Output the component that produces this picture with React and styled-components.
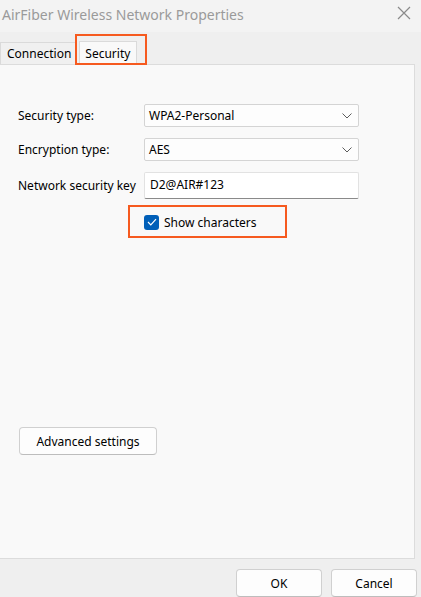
import React from "react";
import styled, { createGlobalStyle } from "styled-components";

const GlobalStyle = createGlobalStyle`
  html, body {
    margin: 0;
    padding: 0;
    background: #f0f0f0;
  }
  body {
    font-family: "Noto Sans", "Liberation Sans", sans-serif;
  }
`;

const Window = styled.div`
  width: 421px;
  height: 597px;
  display: flex;
  flex-direction: column;
  background: #efefef;
  overflow: hidden;
  font-size: 12px;
  color: #1a1a1a;
`;

const TitleBar = styled.div`
  height: 32px;
  flex: 0 0 32px;
  display: flex;
  align-items: center;
  justify-content: space-between;
  background: #f3f3f3;
  padding: 0 10px 0 2px;
`;

const Title = styled.div`
  font-size: 14px;
  color: #9a9a9a;
  margin-top: -4px;
`;

const CloseIcon = styled.svg`
  width: 14px;
  height: 14px;
  margin-top: -6px;
`;

const TabStrip = styled.div`
  position: relative;
  height: 32px;
  flex: 0 0 32px;
  display: flex;
  align-items: flex-end;
  gap: 3px;
`;

const Tab = styled.div`
  position: relative;
  height: ${(p) => (p.$active ? "24px" : "22px")};
  padding: ${(p) => (p.$active ? "0 6px 0 5px" : "0 4px 0 6px")};
  display: flex;
  align-items: center;
  box-sizing: border-box;
  background: ${(p) => (p.$active ? "#f9f9f9" : "#f0f0f0")};
  border: 1px solid #dadada;
  border-bottom: none;
  margin-bottom: ${(p) => (p.$active ? "-1px" : "0")};
  z-index: ${(p) => (p.$active ? 2 : 1)};
  font-size: 12px;
  color: #000;
`;

const Highlight = styled.div`
  position: absolute;
  border: 2px solid #f65a1f;
  pointer-events: none;
  z-index: 3;
  left: ${(p) => p.$left}px;
  top: ${(p) => p.$top}px;
  width: ${(p) => p.$width}px;
  height: ${(p) => p.$height}px;
  box-sizing: border-box;
`;

const Panel = styled.div`
  position: relative;
  height: 495px;
  flex: 0 0 495px;
  margin-right: 6px;
  margin-left: -1px;
  background: #f9f9f9;
  border: 1px solid #dcdcdc;
  box-sizing: border-box;
  display: flex;
  flex-direction: column;
  padding: 39px 0 0 18px;
`;

const Form = styled.div`
  display: grid;
  grid-template-columns: 126px 215px;
  row-gap: 11px;
  align-items: center;
`;

const Label = styled.div`
  font-size: 12px;
  color: #000;
  white-space: nowrap;
`;

const Select = styled.div`
  height: 23px;
  box-sizing: border-box;
  background: #fdfdfd;
  border: 1px solid #d4d4d4;
  border-radius: 2px;
  display: flex;
  align-items: center;
  justify-content: space-between;
  padding: 0 6px 0 4px;
  font-size: 12px;
  color: #000;
`;

const Input = styled.div`
  height: 27px;
  box-sizing: border-box;
  background: #ffffff;
  border: 1px solid #e2e2e2;
  border-bottom: 1px solid #8a8a8a;
  border-radius: 2px;
  display: flex;
  align-items: center;
  padding: 0 0 3px 5px;
  font-size: 12px;
  color: #000;
`;

const Chevron = styled.svg`
  width: 10px;
  height: 6px;
`;

const CheckRow = styled.div`
  position: relative;
  display: flex;
  align-items: center;
  gap: 5px;
  margin: 15px 0 0 126px;
  height: 16px;
`;

const CheckBox = styled.div`
  width: 15px;
  height: 15px;
  border-radius: 3px;
  background: #005fb8;
  display: flex;
  align-items: center;
  justify-content: center;
`;

const Spacer = styled.div`
  flex: 1;
`;

const Button = styled.div`
  width: ${(p) => p.$width}px;
  height: 28px;
  box-sizing: border-box;
  background: #fdfdfd;
  border: 1px solid #d0d0d0;
  border-bottom-color: #bdbdbd;
  border-radius: 4px;
  display: flex;
  align-items: center;
  justify-content: center;
  font-size: 12px;
  color: #000;
`;

const AdvancedWrap = styled.div`
  margin: 0 0 103px 1px;
`;

const Footer = styled.div`
  display: flex;
  justify-content: flex-end;
  gap: 9px;
  padding: 10px 4px 0 0;
`;

const rows = [
  { label: "Security type:", value: "WPA2-Personal", kind: "select" },
  { label: "Encryption type:", value: "AES", kind: "select" },
  { label: "Network security key", value: "D2@AIR#123", kind: "input" },
];

const ChevronDown = () => (
  <Chevron viewBox="0 0 10 6">
    <path d="M0.5 0.5 L5 5 L9.5 0.5" fill="none" stroke="#5c5c5c" strokeWidth="1" />
  </Chevron>
);

export default function App() {
  return (
    <>
      <GlobalStyle />
      <Window>
        <TitleBar>
          <Title>AirFiber Wireless Network Properties</Title>
          <CloseIcon viewBox="0 0 14 14">
            <path d="M1 1 L13 13 M13 1 L1 13" stroke="#8a8a8a" strokeWidth="1.2" />
          </CloseIcon>
        </TitleBar>
        <TabStrip>
          <Tab>Connection</Tab>
          <Tab $active>Security</Tab>
          <Highlight $left={75} $top={2} $width={72} $height={31} />
        </TabStrip>
        <Panel>
          <Form>
            {rows.map((r) => (
              <React.Fragment key={r.label}>
                <Label>{r.label}</Label>
                {r.kind === "select" ? (
                  <Select>
                    <span>{r.value}</span>
                    <ChevronDown />
                  </Select>
                ) : (
                  <Input>{r.value}</Input>
                )}
              </React.Fragment>
            ))}
          </Form>
          <CheckRow>
            <CheckBox>
              <svg width="10" height="8" viewBox="0 0 10 8">
                <path d="M1 4 L3.8 6.8 L9 1.2" fill="none" stroke="#fff" strokeWidth="1.2" />
              </svg>
            </CheckBox>
            <Label>Show characters</Label>
            <Highlight $left={-16} $top={-9} $width={159} $height={33} />
          </CheckRow>
          <Spacer />
          <AdvancedWrap>
            <Button $width={138}>Advanced settings</Button>
          </AdvancedWrap>
        </Panel>
        <Footer>
          <Button $width={86}>OK</Button>
          <Button $width={86}>Cancel</Button>
        </Footer>
      </Window>
    </>
  );
}
